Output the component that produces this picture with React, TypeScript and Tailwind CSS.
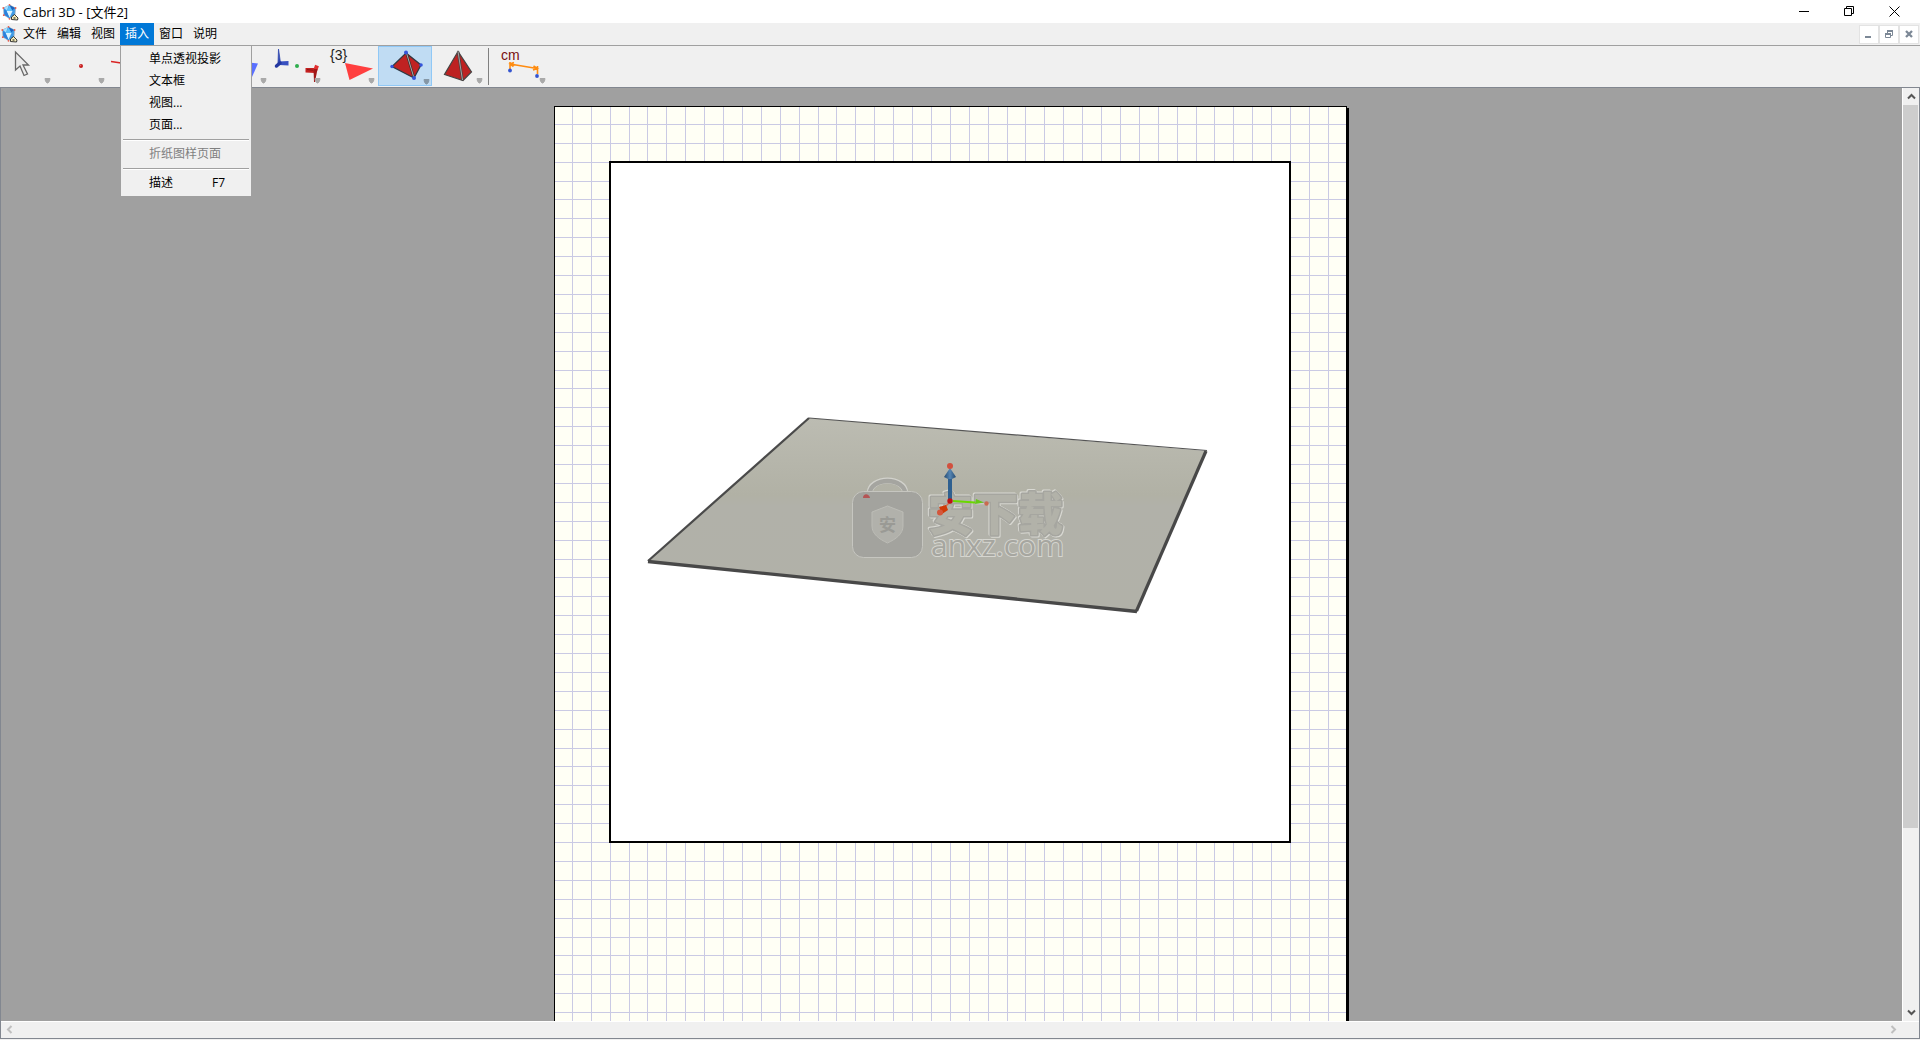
import React from 'react';
import clsx from 'clsx';

const menus = ['文件', '编辑', '视图', '插入', '窗口', '说明'];

const insertMenu = [
    { label: '单点透视投影' },
    { label: '文本框' },
    { label: '视图...' },
    { label: '页面...' },
    { separator: true },
    { label: '折纸图样页面', disabled: true },
    { separator: true },
    { label: '描述', shortcut: 'F7' },
];

const AppIcon = () => (
    <svg width="18" height="18" viewBox="0 0 18 18" aria-hidden="true">
        <path d="M8.500 2 14.500 5 14 12 8.500 15.500 3 12 2.500 5Z" fill="#3f9be6" stroke="#9fb3c0" strokeWidth="0.800" />
        <path d="M8 2 3 5 6 7.500Z" fill="#a8e0ff" />
        <path d="M8.500 2 14 5 11 7.500Z" fill="#1c63bd" />
        <path d="M8.500 2.500 11.500 8 5.500 8Z" fill="#5cc0fa" />
        <path d="M5.500 8 11.500 8 8.500 14.500Z" fill="#dcf4ff" />
        <path d="M3 6 5.500 8 8.500 15 3.500 12Z" fill="#2a80dc" />
        <g fill="#ea5a4a">
            <circle cx="8.500" cy="1.800" r="0.900" />
            <circle cx="2.300" cy="5" r="0.900" />
            <circle cx="14.600" cy="5" r="0.900" />
            <circle cx="2.800" cy="12.200" r="0.900" />
            <circle cx="8.500" cy="15.800" r="0.900" />
        </g>
        <path d="M10.500 14 13.500 11.500 17 15 16.500 17 10.500 16.500Z" fill="#f7efbd" stroke="#222" strokeWidth="0.900" />
        <path d="M12.500 14.500h2v1h-2z" fill="#111" />
    </svg>
);

const TitleBar = () => (
    <header className="flex h-[23px] shrink-0 items-center bg-white pr-[3px] pl-px">
        <AppIcon />
        <h1 className="ml-1 flex-1 text-[13px] leading-4 whitespace-nowrap">Cabri 3D - [文件2]</h1>
        <button aria-label="Minimize" className="flex h-full w-[45px] items-center justify-center">
            <svg width="11" height="11" shapeRendering="crispEdges"><path d="M0 5h10v1H0z" /></svg>
        </button>
        <button aria-label="Restore" className="flex h-full w-[45px] items-center justify-center">
            <svg width="11" height="11" viewBox="0 0 11 11" fill="none" stroke="#000"><path d="M.5 2.500h7v7h-7zM2.500 2.500V.5h7v7h-2" /></svg>
        </button>
        <button aria-label="Close" className="flex h-full w-[45px] items-center justify-center">
            <svg width="11" height="11" viewBox="0 0 11 11" fill="none" stroke="#000"><path d="M.5.5l10 10M10.500.5l-10 10" /></svg>
        </button>
    </header>
);

const InsertMenu = () => (
    <ul role="menu" className="absolute top-[22px] left-0 z-20 w-[132px] border border-[#a0a0a0] bg-[#f0f0f0] px-0.5 py-0.5 text-black">
        {insertMenu.map((item, i) =>
            item.separator ? (
                <li key={i} role="separator" className="flex h-[7px] items-center">
                    <div className="mt-px h-0.5 w-full border-t border-b border-t-[#a0a0a0] border-b-white" />
                </li>
            ) : (
                <li key={i} role="none">
                    <button
                        role="menuitem"
                        disabled={item.disabled}
                        className="flex h-[22px] w-full items-center pr-6 pl-[26px] text-left whitespace-nowrap disabled:text-[#7f7f7f]"
                    >
                        <span className="flex-1">{item.label}</span>
                        {item.shortcut && <span>{item.shortcut}</span>}
                    </button>
                </li>
            )
        )}
    </ul>
);

const MdiButton = ({ label, children }: { label: string; children: React.ReactNode }) => (
    <button aria-label={label} className="flex h-[19px] w-5 items-center justify-center border border-[#e3e3e3] bg-white">
        <svg width="10" height="10" viewBox="0 0 10 10" fill="none" stroke="#7c8896">{children}</svg>
    </button>
);

const MenuBar = () => (
    <nav className="flex h-[23px] shrink-0 items-stretch border-b border-[#a0a0a0] bg-[#f0f0f0]">
        <div className="flex w-[18px] items-center">
            <AppIcon />
        </div>
        {menus.map((name) => {
            const open = name === '插入';
            return (
                <div key={name} className="relative">
                    <button
                        aria-haspopup="menu"
                        aria-expanded={open}
                        className={clsx('h-[22px] w-[34px] text-center leading-[22px]', open && 'bg-[#0078d7] text-white')}
                    >
                        {name}
                    </button>
                    {open && <InsertMenu />}
                </div>
            );
        })}
        <div className="ml-auto flex items-center pr-px">
            <MdiButton label="Minimize document"><path d="M1 8h6" strokeWidth="2" /></MdiButton>
            <MdiButton label="Restore document">
                <path d="M1.500 5v3.500h5V5" /><path d="M1 5h6M3 2h6" strokeWidth="2" /><path d="M3.500 4V1M8.500 1v5.500H7" />
            </MdiButton>
            <MdiButton label="Close document"><path d="M2 2l6 6M8 2L2 8" strokeWidth="2.300" /></MdiButton>
        </div>
    </nav>
);

const tools = [
    {
        label: 'Manipulation',
        icon: <path d="M15.500 6v18l4.500-4 4 9.500 3.500-1.500-4.500-9h5.500Z" fill="#ebebeb" stroke="#686868" strokeWidth="1.300" />,
    },
    {
        label: 'Point',
        icon: <><circle cx="27" cy="20" r="2" fill="#c41c1c" /><circle cx="26.500" cy="19.500" r="0.800" fill="#ef6a6a" /></>,
    },
    { label: 'Line', icon: <path d="M3 15.500 40 21" stroke="#d92323" strokeWidth="1.600" /> },
    { label: 'Plane', icon: <path d="M10 10 42 16 20 30Z" fill="#5a78ff" /> },
    { label: 'Perpendicular', icon: <path d="M8 14 42 17.500 36 31Z" fill="#5a70ff" /> },
    {
        label: 'Central symmetry',
        icon: (
            <>
                <path d="M8.500 3 10.500 17 8 17Z" fill="#3048b0" stroke="#3048b0" strokeWidth="0.800" />
                <path d="M9 15.500 18.500 15v4.500L9.500 19Z" fill="#3850c0" />
                <path d="M10 17 6.500 20" stroke="#2438a0" strokeWidth="3.500" strokeLinecap="round" />
                <circle cx="27" cy="20" r="2" fill="#2fae4d" />
                <path d="M35.500 22v4.500L45 27v-5Z" fill="#c42020" />
                <path d="M37 23.500 45 24.500" stroke="#8f1515" />
                <path d="M45 25 47 19.500" stroke="#e03030" strokeWidth="4" />
                <path d="M43.500 23h4l-2.500 13h-1Z" fill="#a01818" />
            </>
        ),
    },
    {
        label: 'Polygon',
        icon: (
            <>
                <path d="M21 17 49 22.500 25.500 34Z" fill="#ff3f3f" />
                <text x="6" y="14" className="text-[14px]" fill="#222">{'{3}'}</text>
            </>
        ),
    },
    {
        label: 'Tetrahedron',
        active: true,
        icon: (
            <>
                <path d="M28 7 43 19 36 32 14 20.500Z" fill="#c02222" stroke="#303842" strokeWidth="1.300" />
                <path d="M28.500 7 36 32" stroke="#333" strokeWidth="2.400" />
                <path d="M28.500 7 36 32" stroke="#b0a8a8" strokeWidth="1" />
                <g fill="#3455dc">
                    <circle cx="28" cy="6.500" r="2" /><circle cx="43" cy="19" r="1.800" />
                    <circle cx="14" cy="20.500" r="1.700" /><circle cx="36" cy="32" r="2" />
                </g>
            </>
        ),
    },
    {
        label: 'Regular polyhedron',
        icon: (
            <>
                <path d="M26 5.500 12.500 28.500 31 34.500 39.500 26Z" fill="#bd2222" stroke="#444" strokeWidth="1.200" />
                <path d="M26 5.500 30.500 34" stroke="#444" strokeWidth="2.400" />
                <path d="M26 5.500 30.500 34" stroke="#aaa0a0" strokeWidth="1" />
            </>
        ),
    },
    {
        label: 'Distance',
        icon: (
            <>
                <text x="6" y="14" className="text-[14px]" fill="#7a1010">cm</text>
                <path d="M15 16v7M42.500 20v8M15 18 42 22.500M19 16.500l-4 1.500 3.500 2.500M38.500 20l4 2.500-4.500 1.500" fill="none" stroke="#ff8c10" strokeWidth="1.600" />
                <circle cx="15" cy="24.500" r="1.900" fill="#3455d0" /><circle cx="42" cy="30" r="1.900" fill="#3455d0" />
            </>
        ),
    },
];

const Toolbar = () => (
    <div role="toolbar" className="flex h-[42px] shrink-0 items-start border-b border-[#828790] bg-[#f0f0f0]">
        {tools.map((tool) => (
            <React.Fragment key={tool.label}>
                {tool.label === 'Distance' && <div className="mt-0.5 mr-[6px] ml-0.5 h-[37px] w-px bg-[#808080]" />}
                <button
                    aria-label={tool.label}
                    aria-pressed={!!tool.active}
                    className={clsx('h-10 w-[54px]', tool.active && 'bg-[#c0dcf3] outline outline-1 -outline-offset-1 outline-[#90c8f6]')}
                >
                    <svg width="54" height="40" viewBox="0 0 54 40" className="font-['Liberation_Sans',sans-serif]">
                        {tool.icon}
                        <path
                            d={tool.active ? 'M46 33.500h5l-.5 2.500-1.500 2h-1l-1.500-2Z' : 'M45 32.500h5l-.5 2.500-1.500 2h-1l-1.500-2Z'}
                            fill={tool.active ? '#8597a6' : '#a9a9a9'}
                            stroke={tool.active ? '#8597a6' : '#a9a9a9'}
                            strokeLinejoin="round"
                        />
                    </svg>
                </button>
            </React.Fragment>
        ))}
    </div>
);

// half-centimetre paper grid at 96 dpi
const STEP = 18.9;
const lines = (count: number) => Array.from({ length: count }, (_, k) => Math.floor(17.35 + k * STEP));

const PaperGrid = () => (
    <svg className="absolute inset-0 h-full w-full" shapeRendering="crispEdges" aria-hidden="true">
        {lines(59).map((y) => <rect key={y} x="0" y={y} width="100%" height="1" fill="#cacae4" />)}
        {lines(41).map((x) => <rect key={x} x={x} y="0" width="1" height="100%" fill="#cacae4" />)}
    </svg>
);

const Watermark = () => (
    <g>
        <path d="M870 492a17.500 11.500 0 0 1 35 0" fill="none" stroke="#d2d2cc" strokeWidth="6" />
        <path d="M870 493a17.500 12 0 0 1 35 0" fill="none" stroke="#a5a5a0" strokeWidth="4.500" />
        <rect x="852.500" y="491.500" width="70" height="66" rx="11" fill="#a3a39e" stroke="#c6c6c0" />
        <path d="M887.500 506 903 512v14c0 8-7 13-15.500 17-8.500-4-15.500-9-15.500-17v-14Z" fill="#b1b1ab" stroke="#bcbcb6" />
        <text x="887.500" y="531" textAnchor="middle" className="text-[17px] font-bold" fill="#9a9a95">安</text>
        <text
            x="928"
            y="531"
            className="text-[45px] font-black [filter:drop-shadow(1px_1px_0_#d8d8d2)_drop-shadow(-1px_-1px_0_#d8d8d2)]"
            fill="#b2b2a9"
            stroke="#a6a6a0"
            strokeWidth="3"
            strokeLinejoin="round"
            paintOrder="stroke"
        >
            安下载
        </text>
        <text x="931" y="556" className="font-['Open_Sans',sans-serif] text-[30px]" fill="#a6a6a0" stroke="#d6d6d0" strokeWidth="2" paintOrder="stroke">anxz.com</text>
    </g>
);

const Scene = () => (
    <svg className="block aspect-square w-full" viewBox="611 163 678 678">
        <defs>
            <linearGradient id="ground" gradientUnits="userSpaceOnUse" x1="0" y1="418" x2="0" y2="612">
                <stop offset="0" stopColor="#bcbcb2" />
                <stop offset="0.250" stopColor="#b5b5aa" />
                <stop offset="0.400" stopColor="#b1b1a5" />
                <stop offset="0.450" stopColor="#b1b1a9" />
                <stop offset="1" stopColor="#b1b1a8" />
            </linearGradient>
            <linearGradient id="cone">
                <stop offset="0" stopColor="#254a70" />
                <stop offset="0.500" stopColor="#5686b4" />
                <stop offset="1" stopColor="#254a70" />
            </linearGradient>
        </defs>
        <path d="M809 418 1207 451 1137 611 648 561Z" fill="url(#ground)" />
        <path d="M809 418 1207 450.500" stroke="#555" strokeWidth="1.200" />
        <path d="M809 418 648 561" stroke="#4a4a4a" strokeWidth="2.200" />
        <path d="M1206 451 1136.500 611" stroke="#484848" strokeWidth="3.200" />
        <path d="M648 561.500 1137 611.500" stroke="#484848" strokeWidth="3.400" />
        <Watermark />
        <path d="M863 498c0-5 6-5 7 0Z" fill="#b45555" />
        <path d="M948 478h4v22h-4z" fill="#2f6090" />
        <path d="M950 468 956 477 952 479h-4l-4-2Z" fill="url(#cone)" />
        <circle cx="950" cy="466" r="3" fill="#d2503e" />
        <path d="M953 501 975 502.500" stroke="#6ad800" strokeWidth="2" />
        <path d="M976 499 984 502.500 975 504Z" fill="#65c818" />
        <circle cx="986.500" cy="503.500" r="2.200" fill="#c96a50" />
        <path d="M950 502 944 508" stroke="#d26a50" strokeWidth="1.500" />
        <path d="M939 507 946 505 948 510 942 514Z" fill="#d03a08" />
        <circle cx="940" cy="512.500" r="3" fill="#d4573c" />
        <circle cx="950" cy="501" r="2.700" fill="#bd1414" />
    </svg>
);

const Chevron = ({ d }: { d: string }) => (
    <svg width="9" height="9" viewBox="0 0 9 9" fill="none" stroke="currentColor" strokeWidth="2"><path d={d} /></svg>
);

const VerticalScrollbar = () => (
    <div className="flex w-[17px] shrink-0 flex-col border-l border-white bg-[#f0f0f0] text-[#555]">
        <button aria-label="Scroll up" className="flex h-[17px] items-center justify-center"><Chevron d="M1 6.500 4.500 3 8 6.500" /></button>
        <div className="flex-1">
            <div className="mr-px h-[80.4%] bg-[#cdcdcd]" />
        </div>
        <button aria-label="Scroll down" className="flex h-[17px] items-center justify-center"><Chevron d="M1 2.500 4.500 6 8 2.500" /></button>
    </div>
);

const HorizontalScrollbar = () => (
    <div className="flex h-[17px] shrink-0 items-start justify-between border-t border-white bg-[#f0f0f0] pr-[17px] text-[#bfbfbf]">
        <button aria-label="Scroll left" className="flex h-[15px] w-[17px] items-center justify-center"><Chevron d="M6.500 1 3 4.500 6.500 8" /></button>
        <button aria-label="Scroll right" className="flex h-[15px] w-[17px] items-center justify-center"><Chevron d="M2.500 1 6 4.500 2.500 8" /></button>
    </div>
);

export default function App() {
    return (
        <div className="flex h-screen flex-col overflow-hidden bg-[#f0f0f0] pb-px font-['Open_Sans','Noto_Sans_CJK_SC',sans-serif] text-xs text-black">
            <TitleBar />
            <MenuBar />
            <Toolbar />
            <div className="flex min-h-0 flex-1 flex-col border-x border-b border-[#828790]">
                <div className="flex min-h-0 flex-1">
                    <main className="flex flex-1 items-start justify-center overflow-hidden bg-[#a0a0a0] pt-[18px]">
                        <section className="relative mr-0.5 h-[1123px] w-[793px] shrink-0 border border-black bg-[#fffff5] p-[54px] shadow-[2px_2px_0_0_#000]">
                            <PaperGrid />
                            <div className="relative mr-px border-2 border-black bg-white">
                                <Scene />
                            </div>
                        </section>
                    </main>
                    <VerticalScrollbar />
                </div>
                <HorizontalScrollbar />
            </div>
        </div>
    );
}
